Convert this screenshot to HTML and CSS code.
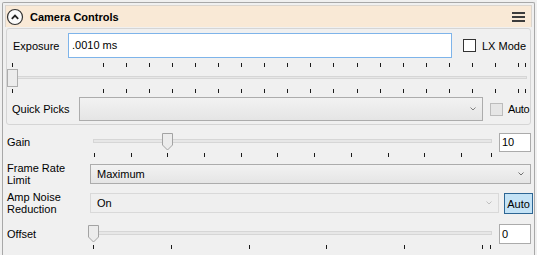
FILE: index.html
```html
<!DOCTYPE html>
<html lang="en">
<head>
    <meta charset="UTF-8">
    <title>Camera Controls</title>
    <link rel="stylesheet" href="styles.css">
</head>
<body>
    <div class="panel">
        <div class="header">
            <svg class="expand-icon" width="18" height="18" viewBox="0 0 18 18">
                <circle cx="9" cy="9" r="7.5" fill="#fbfbfb" stroke="#333" stroke-width="1.2"/>
                <polyline points="5.8,10.8 9,7.6 12.2,10.8" fill="none" stroke="#222" stroke-width="1.8"/>
            </svg>
            <span class="title">Camera Controls</span>
            <svg class="menu-icon" width="13" height="11" viewBox="0 0 13 11">
                <rect x="0" y="0" width="13" height="2" fill="#3c3c3c"/>
                <rect x="0" y="4" width="13" height="2" fill="#3c3c3c"/>
                <rect x="0" y="8" width="13" height="2" fill="#3c3c3c"/>
            </svg>
        </div>

        <div class="group">
            <div class="row exposure-row">
                <span class="lbl exposure-lbl">Exposure</span>
                <div class="textbox">.0010 ms</div>
                <span class="checkbox"></span>
                <span class="check-text">LX Mode</span>
            </div>

            <div class="trackbar tb-exposure">
                <div class="ticks">
                    <span class="tick"></span>
                    <div class="tick-run" data-count="19"></div>
                    <span class="tick tick-end"></span>
                </div>
                <div class="track"></div>
                <div class="thumb-rect" style="left:0px"></div>
                <div class="ticks ticks-bottom">
                    <span class="tick"></span>
                    <div class="tick-run" data-count="19"></div>
                    <span class="tick tick-end"></span>
                </div>
            </div>

            <div class="row picks-row">
                <span class="lbl picks-lbl">Quick Picks</span>
                <div class="combo picks-combo">
                    <span class="combo-text"></span>
                    <svg class="arrow" width="6" height="4" viewBox="0 0 6 4"><polyline points="0.5,0.5 3,3 5.5,0.5" fill="none" stroke="#808080"/></svg>
                </div>
                <span class="checkbox disabled"></span>
                <span class="check-text picks-auto">Auto</span>
            </div>
        </div>

        <div class="field gain-row">
            <span class="lbl side-lbl">Gain</span>
            <div class="trackbar tb-slim tb-gain">
                <svg class="thumb" style="left:73px" width="11" height="18" viewBox="0 0 11 18">
                    <polygon points="0.5,0.5 10.5,0.5 10.5,12 5.5,17 0.5,12" fill="#ececec" stroke="#a3a3a3"/>
                </svg>
                <div class="track"></div>
                <div class="ticks">
                    <div class="tick-run" data-count="11"></div>
                    <span class="tick tick-end"></span>
                </div>
            </div>
            <div class="valuebox">10</div>
        </div>

        <div class="field frame-row">
            <span class="lbl side-lbl two-line">Frame Rate<br>Limit</span>
            <div class="combo frame-combo">
                <span class="combo-text">Maximum</span>
                <svg class="arrow" width="6" height="4" viewBox="0 0 6 4"><polyline points="0.5,0.5 3,3 5.5,0.5" fill="none" stroke="#707070"/></svg>
            </div>
        </div>

        <div class="field amp-row">
            <span class="lbl side-lbl two-line">Amp Noise<br>Reduction</span>
            <div class="combo disabled amp-combo">
                <span class="combo-text">On</span>
                <svg class="arrow" width="6" height="4" viewBox="0 0 6 4"><polyline points="0.5,0.5 3,3 5.5,0.5" fill="none" stroke="#c0c0c0"/></svg>
            </div>
            <button class="toggle-btn">Auto</button>
        </div>

        <div class="field offset-row">
            <span class="lbl side-lbl">Offset</span>
            <div class="trackbar tb-slim tb-offset">
                <svg class="thumb" style="left:-1px" width="11" height="18" viewBox="0 0 11 18">
                    <polygon points="0.5,0.5 10.5,0.5 10.5,12 5.5,17 0.5,12" fill="#ececec" stroke="#a3a3a3"/>
                </svg>
                <div class="track"></div>
                <div class="ticks">
                    <div class="tick-run" data-count="6"></div>
                    <span class="tick tick-end"></span>
                </div>
            </div>
            <div class="valuebox">0</div>
        </div>
    </div>

    <script>
        document.querySelectorAll('.tick-run').forEach(function (run) {
            var count = parseInt(run.dataset.count, 10);
            for (var i = 0; i < count; i++) {
                var tick = document.createElement('span');
                tick.className = 'tick';
                run.appendChild(tick);
            }
        });
    </script>
</body>
</html>
```

FILE: styles.css
```css
body {
    margin: 0;
    background-color: #f0f0f0;
    font-family: "Liberation Sans", Arial, sans-serif;
    font-size: 11px;
    color: #000;
    overflow: hidden;
}
.panel {
    margin: 2px 2px 0 2px;
    height: 253px;
    box-sizing: border-box;
    border: 1px solid #a8a8a8;
    border-bottom: none;
    border-radius: 2px 2px 0 0;
    padding: 2px 2px 0 2px;
}
.header {
    height: 22px;
    box-sizing: border-box;
    display: flex;
    align-items: center;
    background-color: #f9e9d6;
    border: 1px solid #dcd6cf;
    border-bottom: none;
    padding-right: 6px;
}
.expand-icon {
    margin-left: 0;
    flex: none;
}
.title {
    margin-left: 6px;
    font-weight: bold;
    font-size: 11px;
    flex: 1;
}
.menu-icon {
    flex: none;
    margin-top: 2px;
}
.group {
    margin: 1px 0 0 1px;
    width: 525px;
    box-sizing: border-box;
    border: 1px solid #d5d5d5;
    border-radius: 3px;
    padding-bottom: 3px;
    overflow: hidden;
}
.row {
    display: flex;
    align-items: center;
}
.lbl {
    flex: none;
    line-height: 12px;
}
.exposure-row {
    margin-top: 4px;
    padding-left: 6px;
}
.exposure-lbl {
    width: 55px;
}
.textbox {
    width: 384px;
    height: 25px;
    box-sizing: border-box;
    border: 1px solid #7eb4ea;
    background-color: #fff;
    padding-left: 3px;
    line-height: 23px;
}
.checkbox {
    flex: none;
    width: 13px;
    height: 13px;
    box-sizing: border-box;
    border: 1px solid #333;
    background-color: #fff;
    margin-left: 11px;
}
.checkbox.disabled {
    border-color: #bcbcbc;
    background-color: #e6e6e6;
    margin-left: 7px;
}
.check-text {
    margin-left: 6px;
    white-space: nowrap;
}
.picks-auto {
    margin-left: 5px;
    letter-spacing: -0.3px;
}

/* trackbars */
.trackbar {
    position: relative;
    flex: none;
}
.ticks {
    display: flex;
    height: 4px;
}
.tick {
    flex: none;
    width: 1px;
    height: 4px;
    background-color: #1a1a1a;
}
.tick-run {
    display: flex;
    justify-content: space-between;
}
.track {
    height: 3px;
    box-sizing: border-box;
    border: 1px solid #d6d6d6;
    background-color: #e7e7e7;
}
.tb-exposure {
    margin-top: 5px;
}
.tb-exposure .ticks {
    padding-left: 5px;
}
.tb-exposure .tick-run {
    margin-left: 90px;
    width: 416px;
}
.tb-exposure .tick-end {
    margin-left: 6px;
}
.tb-exposure .track {
    margin: 9px 0 10px 1px;
    width: 519px;
}
.thumb-rect {
    position: absolute;
    top: 6px;
    width: 11px;
    height: 18px;
    box-sizing: border-box;
    border: 1px solid #adadad;
    background-color: #ececec;
}
.picks-row {
    margin-top: 4px;
    padding-left: 5px;
}
.picks-lbl {
    width: 67px;
}

/* combos */
.combo {
    flex: none;
    display: flex;
    align-items: center;
    box-sizing: border-box;
    border: 1px solid #acacac;
    background: linear-gradient(#f2f2f2, #e5e5e5);
    padding: 0 6px 0 6px;
}
.combo-text {
    flex: 1;
}
.combo.disabled {
    border-color: #d9d9d9;
    background: #efefef;
}
.picks-combo {
    width: 404px;
    height: 24px;
}
.frame-combo {
    width: 441px;
    height: 20px;
    margin-top: 4px;
    margin-left: 1px;
}
.amp-combo {
    width: 409px;
    height: 20px;
    margin-top: 3px;
    margin-left: 1px;
}

/* lower fields */
.field {
    display: flex;
    align-items: flex-start;
    padding-left: 2px;
}
.side-lbl {
    width: 82px;
}
.gain-row {
    height: 35px;
}
.gain-row .side-lbl {
    margin-top: 11px;
}
.frame-row {
    height: 30px;
}
.frame-row .side-lbl {
    margin-top: 2px;
}
.amp-row {
    height: 32px;
}
.amp-row .side-lbl {
    margin-top: 1px;
}
.offset-row {
    height: 33px;
}
.offset-row .side-lbl {
    margin-top: 6px;
}
.tb-slim {
    width: 410px;
    height: 24px;
}
.gain-row .tb-slim {
    margin-top: 8px;
}
.offset-row .tb-slim {
    margin-top: 3px;
}
.thumb {
    position: absolute;
    top: 0;
    display: block;
}
.tb-slim .track {
    margin: 6px 0 10px 4px;
    width: 399px;
    height: 4px;
}
.tb-gain .ticks {
    padding-left: 5px;
}
.tb-gain .tick-run {
    width: 368px;
}
.tb-gain .tick-end {
    margin-left: 29px;
}
.tb-offset .ticks {
    padding-left: 4px;
}
.tb-offset .tick-run {
    width: 390px;
}
.tb-offset .tick-end {
    margin-left: 7px;
}
.valuebox {
    flex: none;
    width: 32px;
    height: 19px;
    box-sizing: border-box;
    border: 1px solid #ababab;
    background-color: #fff;
    padding-left: 2px;
    line-height: 17px;
    margin-top: 8px;
}
.offset-row .valuebox {
    margin-top: 2px;
    height: 20px;
    line-height: 18px;
}
.toggle-btn {
    flex: none;
    width: 29px;
    height: 21px;
    margin: 3px 0 0 5px;
    padding: 0;
    border: 1px solid #2d6694;
    background-color: #c4e3f6;
    font-family: "Liberation Sans", Arial, sans-serif;
    font-size: 11px;
    color: #000;
}
```
